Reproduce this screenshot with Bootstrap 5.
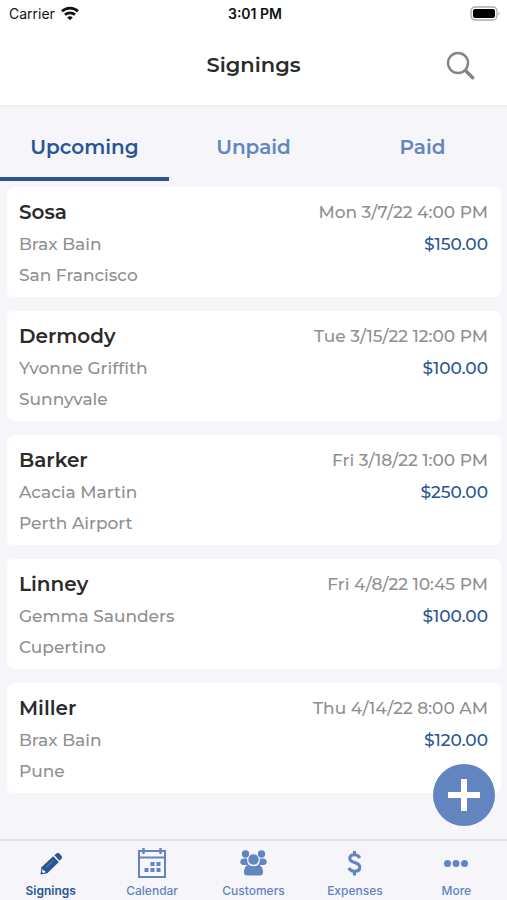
<!DOCTYPE html>
<html lang="en">
<head>
<meta charset="utf-8">
<meta name="viewport" content="width=device-width, initial-scale=1">
<title>Signings</title>
<link href="https://cdn.jsdelivr.net/npm/bootstrap@5.3.0/dist/css/bootstrap.min.css" rel="stylesheet">
<style>
  :root { --navy: #2b5592; --sky: #6385bf; --canvas: #f5f5fa; --ink: #2b2b2b; --muted: #8f8f8f; }
  body { font-family: Montserrat, Inter, sans-serif; background: var(--canvas); color: var(--ink); }
  .status-bar { height: 28px; padding: 0 6px 0 9px; color: #111; font: 14px/28px Inter, sans-serif; }
  .app-header { height: 79px; padding-bottom: 3px; border-bottom: 2px solid #efeff3; }
  .app-title { font-size: 21px; line-height: 28px; font-weight: 600; }
  .search-btn { margin-right: 32px; line-height: 0; }
  .tab-link { height: 74px; padding: 10px 0 0; border: 0; border-bottom: 4px solid transparent; border-radius: 0; background: none; color: var(--sky); font-size: 20px; line-height: 28px; font-weight: 600; }
  .tab-link.active { color: var(--navy); border-color: var(--navy); }
  .signing-list { padding: 6px 6px 14px 7px; gap: 14px; }
  .signing { height: 110px; padding: 8px 13px 8px 12px; border: 0; border-radius: 6px; font-size: 17px; line-height: 31px; font-weight: 500; color: var(--muted); }
  .signing-head { line-height: 34px; }
  .signing h2 { margin: 0; font-size: 20px; line-height: 34px; font-weight: 600; color: var(--ink); }
  .amount { color: var(--navy); }
  .add-btn { right: 12px; bottom: 13px; width: 62px; height: 62px; background: var(--sky); }
  .bottom-nav { height: 61px; border-top: 2px solid #dedee4; background: var(--canvas); font-family: Inter, sans-serif; }
  .bottom-nav a { padding-top: 6px; color: var(--sky); font-size: 12px; line-height: 16px; font-weight: 500; }
  .bottom-nav a.active { color: var(--navy); font-weight: 600; }
  .bottom-nav svg { margin-bottom: 4px; }
</style>
</head>
<body>
<div class="d-flex flex-column vh-100 overflow-hidden">
  <header class="bg-white flex-shrink-0">
    <div class="status-bar row g-0">
      <div class="col d-flex align-items-center gap-1">
        <span>Carrier</span>
        <svg width="22" height="18" viewBox="0 0 22 18" fill="none" stroke="#111" stroke-width="2.7" aria-hidden="true"><path d="M3 6.300a11.500 11.500 0 0 1 16 0M6 9.800a7.200 7.200 0 0 1 10 0"/><path d="M8.200 12.500a4 4 0 0 1 5.600 0L11 15.300z" fill="#111" stroke="none"/></svg>
      </div>
      <div class="col-auto fw-semibold">3:01 PM</div>
      <div class="col d-flex align-items-center justify-content-end">
        <svg width="31" height="16" viewBox="0 0 31 16" aria-hidden="true"><rect x="1" y="1" width="26" height="13" rx="4" fill="#fff" stroke="#aaa" stroke-width="1.3"/><rect x="3" y="3" width="22" height="9" rx="2" fill="#000"/><path d="M28.6 5.4q2.2 2.1 0 4.2z" fill="#aaa"/></svg>
      </div>
    </div>
    <div class="app-header row g-0 align-items-center">
      <div class="col"></div>
      <h1 class="app-title col-auto m-0">Signings</h1>
      <div class="col text-end">
        <button type="button" class="search-btn btn p-0 border-0" aria-label="Search">
          <svg width="29" height="29" viewBox="0 0 29 29" fill="none" stroke="#858585"><circle cx="12" cy="12" r="10" stroke-width="2.4"/><path d="M19.5 19.5l7.2 7.2" stroke-width="3.4" stroke-linecap="round"/></svg>
        </button>
      </div>
    </div>
  </header>

  <main class="flex-fill d-flex flex-column position-relative overflow-hidden">
    <div class="row g-0 flex-shrink-0" role="tablist">
      <button type="button" class="tab-link col active" role="tab" aria-selected="true">Upcoming</button>
      <button type="button" class="tab-link col" role="tab" aria-selected="false">Unpaid</button>
      <button type="button" class="tab-link col" role="tab" aria-selected="false">Paid</button>
    </div>
    <div class="signing-list d-flex flex-column overflow-auto">
      <article class="signing card flex-shrink-0">
        <div class="signing-head d-flex justify-content-between"><h2>Sosa</h2><span>Mon 3/7/22 4:00 PM</span></div>
        <div class="d-flex justify-content-between"><span>Brax Bain</span><span class="amount">$150.00</span></div>
        <div>San Francisco</div>
      </article>
      <article class="signing card flex-shrink-0">
        <div class="signing-head d-flex justify-content-between"><h2>Dermody</h2><span>Tue 3/15/22 12:00 PM</span></div>
        <div class="d-flex justify-content-between"><span>Yvonne Griffith</span><span class="amount">$100.00</span></div>
        <div>Sunnyvale</div>
      </article>
      <article class="signing card flex-shrink-0">
        <div class="signing-head d-flex justify-content-between"><h2>Barker</h2><span>Fri 3/18/22 1:00 PM</span></div>
        <div class="d-flex justify-content-between"><span>Acacia Martin</span><span class="amount">$250.00</span></div>
        <div>Perth Airport</div>
      </article>
      <article class="signing card flex-shrink-0">
        <div class="signing-head d-flex justify-content-between"><h2>Linney</h2><span>Fri 4/8/22 10:45 PM</span></div>
        <div class="d-flex justify-content-between"><span>Gemma Saunders</span><span class="amount">$100.00</span></div>
        <div>Cupertino</div>
      </article>
      <article class="signing card flex-shrink-0">
        <div class="signing-head d-flex justify-content-between"><h2>Miller</h2><span>Thu 4/14/22 8:00 AM</span></div>
        <div class="d-flex justify-content-between"><span>Brax Bain</span><span class="amount">$120.00</span></div>
        <div>Pune</div>
      </article>
    </div>
    <button type="button" class="add-btn btn position-absolute rounded-circle border-0 p-0 d-flex align-items-center justify-content-center" aria-label="Add signing">
      <svg width="32" height="32" viewBox="0 0 32 32" stroke="#fff" stroke-width="6"><path d="M16 0v32M0 16h32"/></svg>
    </button>
  </main>

  <nav class="bottom-nav row g-0 flex-shrink-0 text-center" aria-label="Main">
    <a href="#" class="col d-flex flex-column align-items-center text-decoration-none active" aria-current="page">
      <svg width="32" height="32" viewBox="0 0 32 32" fill="currentColor" aria-hidden="true"><path d="M5.500 27.500l1-7.200L18.200 9.300l5.600 5.600L12.300 26.300z"/><path d="M19.400 8.200l2.400-2q1.300-.9 2.500.2l2.300 2.500q1 1.300 0 2.500l-2 2.300z"/><path d="M7.600 21.700l1 1.900 2 .8-.5 1.100-2.200.5-.9-.9z" fill="#f5f5fa"/><path d="M11 20.300L18.500 13.300" fill="none" stroke="#6f8db9" stroke-width="1"/></svg>
      <span>Signings</span>
    </a>
    <a href="#" class="col d-flex flex-column align-items-center text-decoration-none">
      <svg width="32" height="32" viewBox="0 0 32 32" fill="none" stroke="currentColor" stroke-width="2" aria-hidden="true"><path d="M3 4h26v26H3zM3 10.500h26"/><path d="M7.500 1v6M24.500 1v6" stroke-width="2.400"/><g fill="currentColor" stroke="none"><path d="M14.500 15h4v4h-4zM20.500 15h4v4h-4zM8.500 21h4v4h-4zM14.500 21h4v4h-4zM20.500 21h4v4h-4z"/></g></svg>
      <span>Calendar</span>
    </a>
    <a href="#" class="col d-flex flex-column align-items-center text-decoration-none">
      <svg width="32" height="32" viewBox="0 0 32 32" fill="currentColor" aria-hidden="true"><circle cx="7.500" cy="7" r="3.700"/><circle cx="23.500" cy="7" r="3.700"/><path d="M2.300 15q0-3.500 3.500-3.500h3.500q-.5 4 1.500 6.500H5.500q-3.200-.5-3.200-3zM28.700 15q0-3.500-3.500-3.500h-3.500q.5 4-1.500 6.500h5.300q3.200-.5 3.200-3z"/><circle cx="15.500" cy="12.500" r="5.700" stroke="#f5f5fa" stroke-width="1"/><path d="M6 25.500q0-6.500 4.500-7.800Q15.500 21 20.500 17.700 25 19 25 25.500q0 3-3 3H9q-3 0-3-3z"/></svg>
      <span>Customers</span>
    </a>
    <a href="#" class="col d-flex flex-column align-items-center text-decoration-none">
      <svg width="32" height="32" viewBox="0 0 32 32" fill="none" stroke="currentColor" stroke-width="3.100" aria-hidden="true"><path d="M20.800 11Q19 7.800 15.500 7.800 10.800 7.800 10.800 11.500C10.800 16.500 20.800 14.500 20.800 20Q20.800 24.300 15.500 24.300 11.500 24.300 9.800 21M15.500 4v4M15.500 24v4.500"/></svg>
      <span>Expenses</span>
    </a>
    <a href="#" class="col d-flex flex-column align-items-center text-decoration-none">
      <svg width="32" height="32" viewBox="0 0 32 32" fill="currentColor" aria-hidden="true"><circle cx="7.500" cy="16.500" r="3.500"/><circle cx="16" cy="16.500" r="3.500"/><circle cx="24.500" cy="16.500" r="3.500"/></svg>
      <span>More</span>
    </a>
  </nav>
</div>
<script src="https://cdn.jsdelivr.net/npm/bootstrap@5.3.0/dist/js/bootstrap.bundle.min.js"></script>
</body>
</html>
